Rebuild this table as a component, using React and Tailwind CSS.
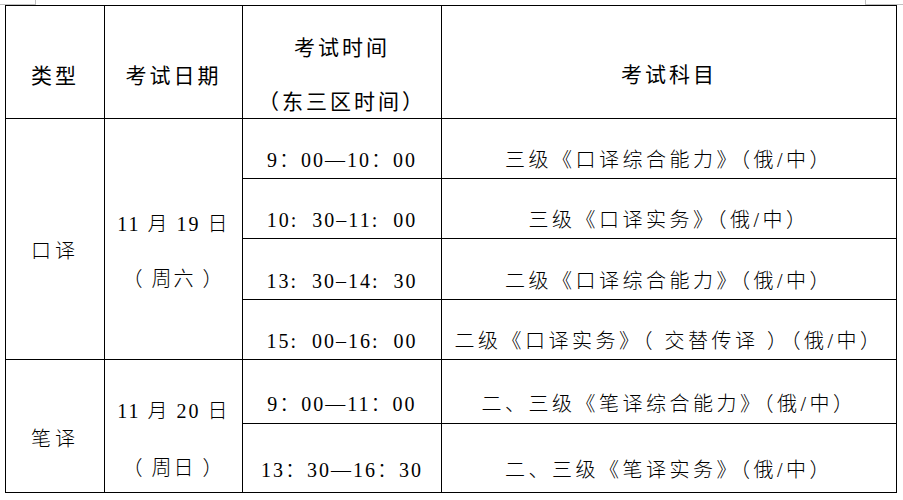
import React from "react";

const body = "font-['Liberation_Serif','Noto_Sans_CJK_SC',serif] font-light text-[20px] leading-[24px] text-black";
const head = "font-['Noto_Sans_CJK_SC','Liberation_Sans',sans-serif] text-[21px] leading-[24px] text-black font-normal tracking-[3px]";
const cell = "border border-black p-0 text-center align-bottom";

const rows = [
  { time: "9：00—10：00", subject: "三级《口译综合能力》（俄/中）", h: "h-[60px]", pb: "pb-[6px]" },
  { time: "10:  30–11:  00", subject: "三级《口译实务》（俄/中）", h: "h-[60px]", pb: "pb-[6px]" },
  { time: "13:  30–14:  30", subject: "二级《口译综合能力》（俄/中）", h: "h-[61px]", pb: "pb-[6px]" },
  { time: "15:  00–16:  00", subject: "二级《口译实务》（ 交替传译 ）（俄/中）", h: "h-[60px]", pb: "pb-[6px]" },
  { time: "9：00—11：00", subject: "二、三级《笔译综合能力》（俄/中）", h: "h-[64px]", pb: "pb-[7px]" },
  { time: "13：30—16：30", subject: "二、三级《笔译实务》（俄/中）", h: "h-[69px]", pb: "pb-[10px]" },
];

// 类型 / 日期 cells spanning several rows
const groups = {
  0: { type: "口译", date: "11 月 19 日", week: "（ 周六 ）", span: 4, typePb: "pb-[96px]", datePb: "pb-[68px]", gap: "gap-[31px]" },
  4: { type: "笔译", date: "11 月 20 日", week: "（ 周日 ）", span: 2, typePb: "pb-[41px]", datePb: "pb-[12px]", gap: "gap-[33px]" },
};

const App = () => {
  return (
    <div className="relative w-[903px] h-[500px] bg-white pl-[5px] pt-[5px]">
      {/* word corner marks */}
      <div className="absolute left-0 top-[4px] w-[36px] h-px bg-[#c0c0c0]" />
      <div className="absolute left-[35px] top-0 w-px h-[5px] bg-[#c0c0c0]" />
      <div className="absolute left-[865px] top-0 w-px h-[5px] bg-[#c0c0c0]" />
      <div className="absolute left-[865px] top-[4px] w-[38px] h-px bg-[#c0c0c0]" />

      <table className="table-fixed border-collapse w-[891px]">
        <colgroup>
          <col className="w-[99px]" />
          <col className="w-[138px]" />
          <col className="w-[199px]" />
          <col className="w-[455px]" />
        </colgroup>
        <thead>
          <tr className="h-[113px]">
            <th className={`${cell} ${head} pb-[32px]`}>类型</th>
            <th className={`${cell} ${head} pb-[32px]`}>考试日期</th>
            <th className={`${cell} ${head} pb-[6px]`}>
              <div className="flex flex-col items-center gap-[30px]">
                <span>考试时间</span>
                <span>（东三区时间）</span>
              </div>
            </th>
            <th className={`${cell} ${head} pb-[33px]`}>考试科目</th>
          </tr>
        </thead>
        <tbody>
          {rows.map((r, i) => {
            const g = groups[i];
            return (
              <tr key={i} className={r.h}>
                {g && (
                  <td rowSpan={g.span} className={`${cell} ${body} ${g.typePb} tracking-[4px]`}>
                    {g.type}
                  </td>
                )}
                {g && (
                  <td rowSpan={g.span} className={`${cell} ${body} ${g.datePb}`}>
                    <div className={`flex flex-col items-center ${g.gap}`}>
                      <span className="tracking-[2px] whitespace-pre">{g.date}</span>
                      <span className="tracking-[2px] whitespace-pre">{g.week}</span>
                    </div>
                  </td>
                )}
                <td className={`${cell} ${body} ${r.pb} tracking-[2px] whitespace-pre`}>{r.time}</td>
                <td className={`${cell} ${body} ${r.pb} tracking-[3.5px] whitespace-pre`}>{r.subject}</td>
              </tr>
            );
          })}
        </tbody>
      </table>
    </div>
  );
};

export default App;
